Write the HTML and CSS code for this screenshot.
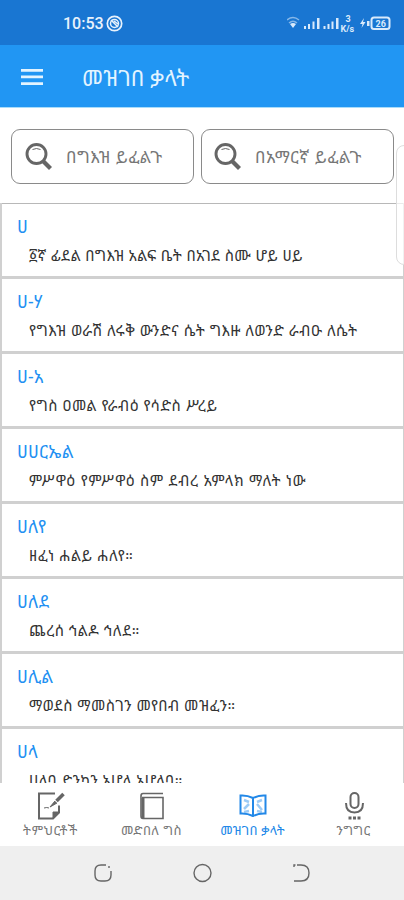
FILE: index.html
```
<!DOCTYPE html>
<html lang="am">
<head>
    <meta charset="UTF-8">
    <meta name="viewport" content="width=device-width, initial-scale=1.0">
    <title>መዝገበ ቃላት</title>
    <link rel="stylesheet" href="styles.css">
</head>
<body>
    <div class="status-bar">
        <span class="clock">10:53</span>
        <svg class="status-badge" width="17" height="17" viewBox="0 0 17 17" fill="none" stroke="#e8f2fc">
            <circle cx="8.5" cy="8.5" r="7.2" stroke-width="1.7"/>
            <circle cx="8.5" cy="8.5" r="4" stroke-width="1.5"/>
            <path d="M5 5l7 7M8 6l4 3" stroke-width="1.5"/>
        </svg>
        <svg class="status-icons" width="108" height="20" viewBox="0 0 108 20" fill="#d9eafb">
            <path d="M0 7q6-5 12 0M2 10q4-3.500 8 0" fill="none" stroke="#86b7e8" stroke-width="1.500"/>
            <path d="M3 11q3-2 6 0l-3 4z"/>
            <path d="M17 13h2v3h-2zM21 11h2v5h-2zM25.500 8.500h2v7.500h-2zM30 5h2.500v11H30z"/>
            <path d="M36.500 13h2v3h-2zM40.500 11h2v5h-2zM44.500 8.500h2v7.500h-2zM49 5h2.500v11H49z"/>
            <text x="58.500" y="9" class="speed">3</text>
            <text x="53.500" y="18.500" class="speed">K/s</text>
            <path d="M77 5l-4 6h2.500l-1 4 4-6H76zM80 8h2.500v5H80z"/>
            <rect x="84.500" y="4.500" width="18" height="11.500" rx="2.500" fill="none" stroke="#d9eafb" stroke-width="2"/>
            <text x="88.500" y="13.500" class="speed">26</text>
        </svg>
    </div>

    <header class="app-bar">
        <svg class="menu" width="22" height="16" viewBox="0 0 22 16" fill="#e3f4ff">
            <path d="M0 0h22v2.700H0zM0 6.600h22v2.700H0zM0 13.200h22v2.700H0z"/>
        </svg>
        <h1>መዝገበ ቃላት</h1>
    </header>

    <div class="search-row">
        <div class="search-box">
            <svg width="28" height="28" viewBox="0 0 28 28" fill="none" stroke="#666">
                <circle cx="11.500" cy="11" r="9.500" stroke-width="2.900"/>
                <path d="M7.500 6.500q4-2 8 0" stroke-width="1"/>
                <path d="M18 18l7.500 7.500" stroke-width="4.200"/>
            </svg>
            <span>በግእዝ ይፈልጉ</span>
        </div>
        <div class="search-box second">
            <svg width="28" height="28" viewBox="0 0 28 28" fill="none" stroke="#666">
                <circle cx="11.500" cy="11" r="9.500" stroke-width="2.900"/>
                <path d="M7.500 6.500q4-2 8 0" stroke-width="1"/>
                <path d="M18 18l7.500 7.500" stroke-width="4.200"/>
            </svg>
            <span>በአማርኛ ይፈልጉ</span>
        </div>
    </div>

    <main class="word-list">
        <div class="word"><h2>ሀ</h2><p>፩ኛ ፊደል በግእዝ አልፍ ቤት በአገደ ስሙ ሆይ ሀይ</p></div>
        <div class="word"><h2>ሀ-ሃ</h2><p>የግእዝ ወራሽ ለሩቅ ውንድና ሴት ግእዙ ለወንድ ራብዑ ለሴት</p></div>
        <div class="word"><h2>ሀ-አ</h2><p>የግስ ዐመል የራብዕ የሳድስ ሥረይ</p></div>
        <div class="word wide"><h2>ሀሀርኤል</h2><p>ምሥዋዕ የምሥዋዕ ስም ደብረ አምላክ ማለት ነው</p></div>
        <div class="word"><h2>ሀለየ</h2><p>ዘፈነ ሐልይ ሐለየ።</p></div>
        <div class="word"><h2>ሀለደ</h2><p>ጨረሰ ኅልዶ ኅለደ።</p></div>
        <div class="word"><h2>ሀሊል</h2><p>ማወደስ ማመስገን መየበብ መዝፈን።</p></div>
        <div class="word"><h2>ሀላ</h2><p>ሀለባ ድንኳን አሆላ አሆላባ።</p></div>
    </main>

    <nav class="tabs">
        <a class="tab">
            <svg width="28" height="28" viewBox="0 0 28 28" fill="none" stroke="#666" stroke-width="2">
                <path d="M18 1.500H2v25h14l6-6v-7"/>
                <path d="M16 26v-6h6z" fill="#666" stroke-width="1"/>
                <path d="M26.500 2l-7 7" stroke-width="3.500"/>
                <path d="M18 9l-5 6 7-4" fill="#666" stroke-width="1"/>
                <path d="M7 16q3-1 5 0" stroke-width="1"/>
            </svg>
            <span>ትምህርቶች</span>
        </a>
        <a class="tab">
            <svg width="28" height="28" viewBox="0 0 28 28" fill="none" stroke="#666" stroke-width="1.600">
                <path d="M25 1.500H5Q3 1.500 3 4v20q0 2.500 2 2.500h20V5.500H4"/>
                <path d="M5 6v20" stroke-width="3"/>
            </svg>
            <span>መድበለ ግስ</span>
        </a>
        <a class="tab active">
            <svg width="28" height="28" viewBox="0 0 28 28" fill="none" stroke="#2288e8" stroke-width="2">
                <path d="M5 8l5 2M5 17l5-5M5 20l5-1M18 10l5-2M18 12l5 6M18 19l5 1" stroke="#9ccbf6" stroke-width="2.500"/>
                <path d="M14 6Q8 3 1.500 3.500v18Q8 21 14 24q6-3 12.500-2.500v-18Q20 3 14 6zM14 6v18"/>
            </svg>
            <span>መዝገበ ቃላት</span>
        </a>
        <a class="tab">
            <svg width="28" height="28" viewBox="0 0 28 28" fill="none" stroke="#666" stroke-width="2">
                <rect x="10.500" y="1" width="8" height="15" rx="4"/>
                <path d="M6 11q0 9.500 8.500 9.500T23 11"/>
                <path d="M8.500 26h3M13 26h3M17.500 26h3" stroke-width="2.800"/>
            </svg>
            <span>ንግግር</span>
        </a>
    </nav>

    <div class="system-nav">
        <svg width="20" height="20" viewBox="0 0 20 20" fill="none" stroke="#666" stroke-width="1.400">
            <path d="M13 2H8Q2 2 2 8v4q0 6 6 6h4q6 0 6-6V8"/>
            <path d="M16 3v2"/>
        </svg>
        <svg width="20" height="20" viewBox="0 0 20 20" fill="none" stroke="#666" stroke-width="1.400">
            <circle cx="10.500" cy="10" r="8.500"/>
        </svg>
        <svg width="20" height="20" viewBox="0 0 20 20" fill="none" stroke="#666" stroke-width="1.400">
            <path d="M6 2h4q8 0 8 8t-8 8H3M3 4V2h1.500"/>
        </svg>
    </div>

    <div class="edge-handle"></div>
</body>
</html>
```
FILE: styles.css
```
* {
    box-sizing: border-box;
}
body {
    margin: 0;
    width: 404px;
    height: 900px;
    overflow: hidden;
    position: relative;
    display: flex;
    flex-direction: column;
    background: #fff;
    font-family: "Noto Sans", "Noto Sans Ethiopic", "Open Sans", sans-serif;
    white-space: nowrap;
}
h1, h2, p {
    margin: 0;
    font-weight: normal;
}
svg {
    flex: none;
}
.status-bar {
    height: 45px;
    background: #1976d2;
    display: flex;
    align-items: center;
    padding: 1px 9px 0 63px;
}
.clock {
    color: #e8f2fc;
    font: 500 16px Roboto, sans-serif;
    width: 43px;
}
.status-icons {
    margin-left: auto;
}
.speed {
    font: bold 9px Roboto, sans-serif;
}
.app-bar {
    height: 63px;
    background: #2196f3;
    border-bottom: 1px solid #a9dcfa;
    display: flex;
    align-items: center;
    padding: 1px 0 0 21px;
}
.app-bar h1 {
    margin: 0 0 0 39px;
    font-size: 22px;
    line-height: 30px;
    letter-spacing: 0.1px;
    color: #e3f4ff;
}
.search-row {
    height: 95px;
    padding: 21px 10px 19px 11px;
    display: flex;
    gap: 7px;
}
.search-box {
    width: 183px;
    height: 55px;
    border: 1px solid #8a8a8a;
    border-radius: 9px;
    display: flex;
    align-items: center;
    padding-left: 13px;
    font-size: 17px;
    letter-spacing: 0.5px;
    color: #777;
}
.search-box span {
    margin: -1px 0 0 13px;
}
.second {
    width: 193px;
    padding-left: 12px;
    letter-spacing: 0.6px;
}
.word-list {
    height: 580px;
    overflow: hidden;
    border-left: 2px solid #d0d0d0;
    border-right: 1px solid #d0d0d0;
}
.word {
    height: 75px;
    border-top: 3px solid #d0d0d0;
    padding: 10px 0 0 15px;
}
.word:first-child {
    height: 73px;
    border-top: 1px solid #b8b8b8;
}
.word:first-child p {
    letter-spacing: 0.35px;
}
.word h2 {
    font-size: 17.5px;
    line-height: 24px;
    letter-spacing: 0.2px;
    color: #2290f2;
}
.word p {
    padding: 5px 0 0 12px;
    font-size: 15px;
    line-height: 24px;
    letter-spacing: 0.5px;
    color: #333;
}
.word.wide p {
    letter-spacing: 0.72px;
}
.tabs {
    height: 63px;
    padding: 9px 0 0;
    display: grid;
    grid-template-columns: repeat(4, 1fr);
}
.tab {
    display: flex;
    flex-direction: column;
    align-items: center;
    font-size: 13px;
    line-height: 20px;
    letter-spacing: 0.5px;
    color: #777;
}
.active {
    color: #2288e8;
    letter-spacing: 0.2px;
}
.system-nav {
    height: 54px;
    background: #efefef;
    display: flex;
    justify-content: center;
    align-items: center;
    gap: 79px;
}
.edge-handle {
    position: absolute;
    left: 396px;
    top: 145px;
    width: 16px;
    height: 120px;
    border: 1px solid #ddd;
    border-radius: 10px;
    background: rgba(255, 255, 255, 0.7);
}
```
